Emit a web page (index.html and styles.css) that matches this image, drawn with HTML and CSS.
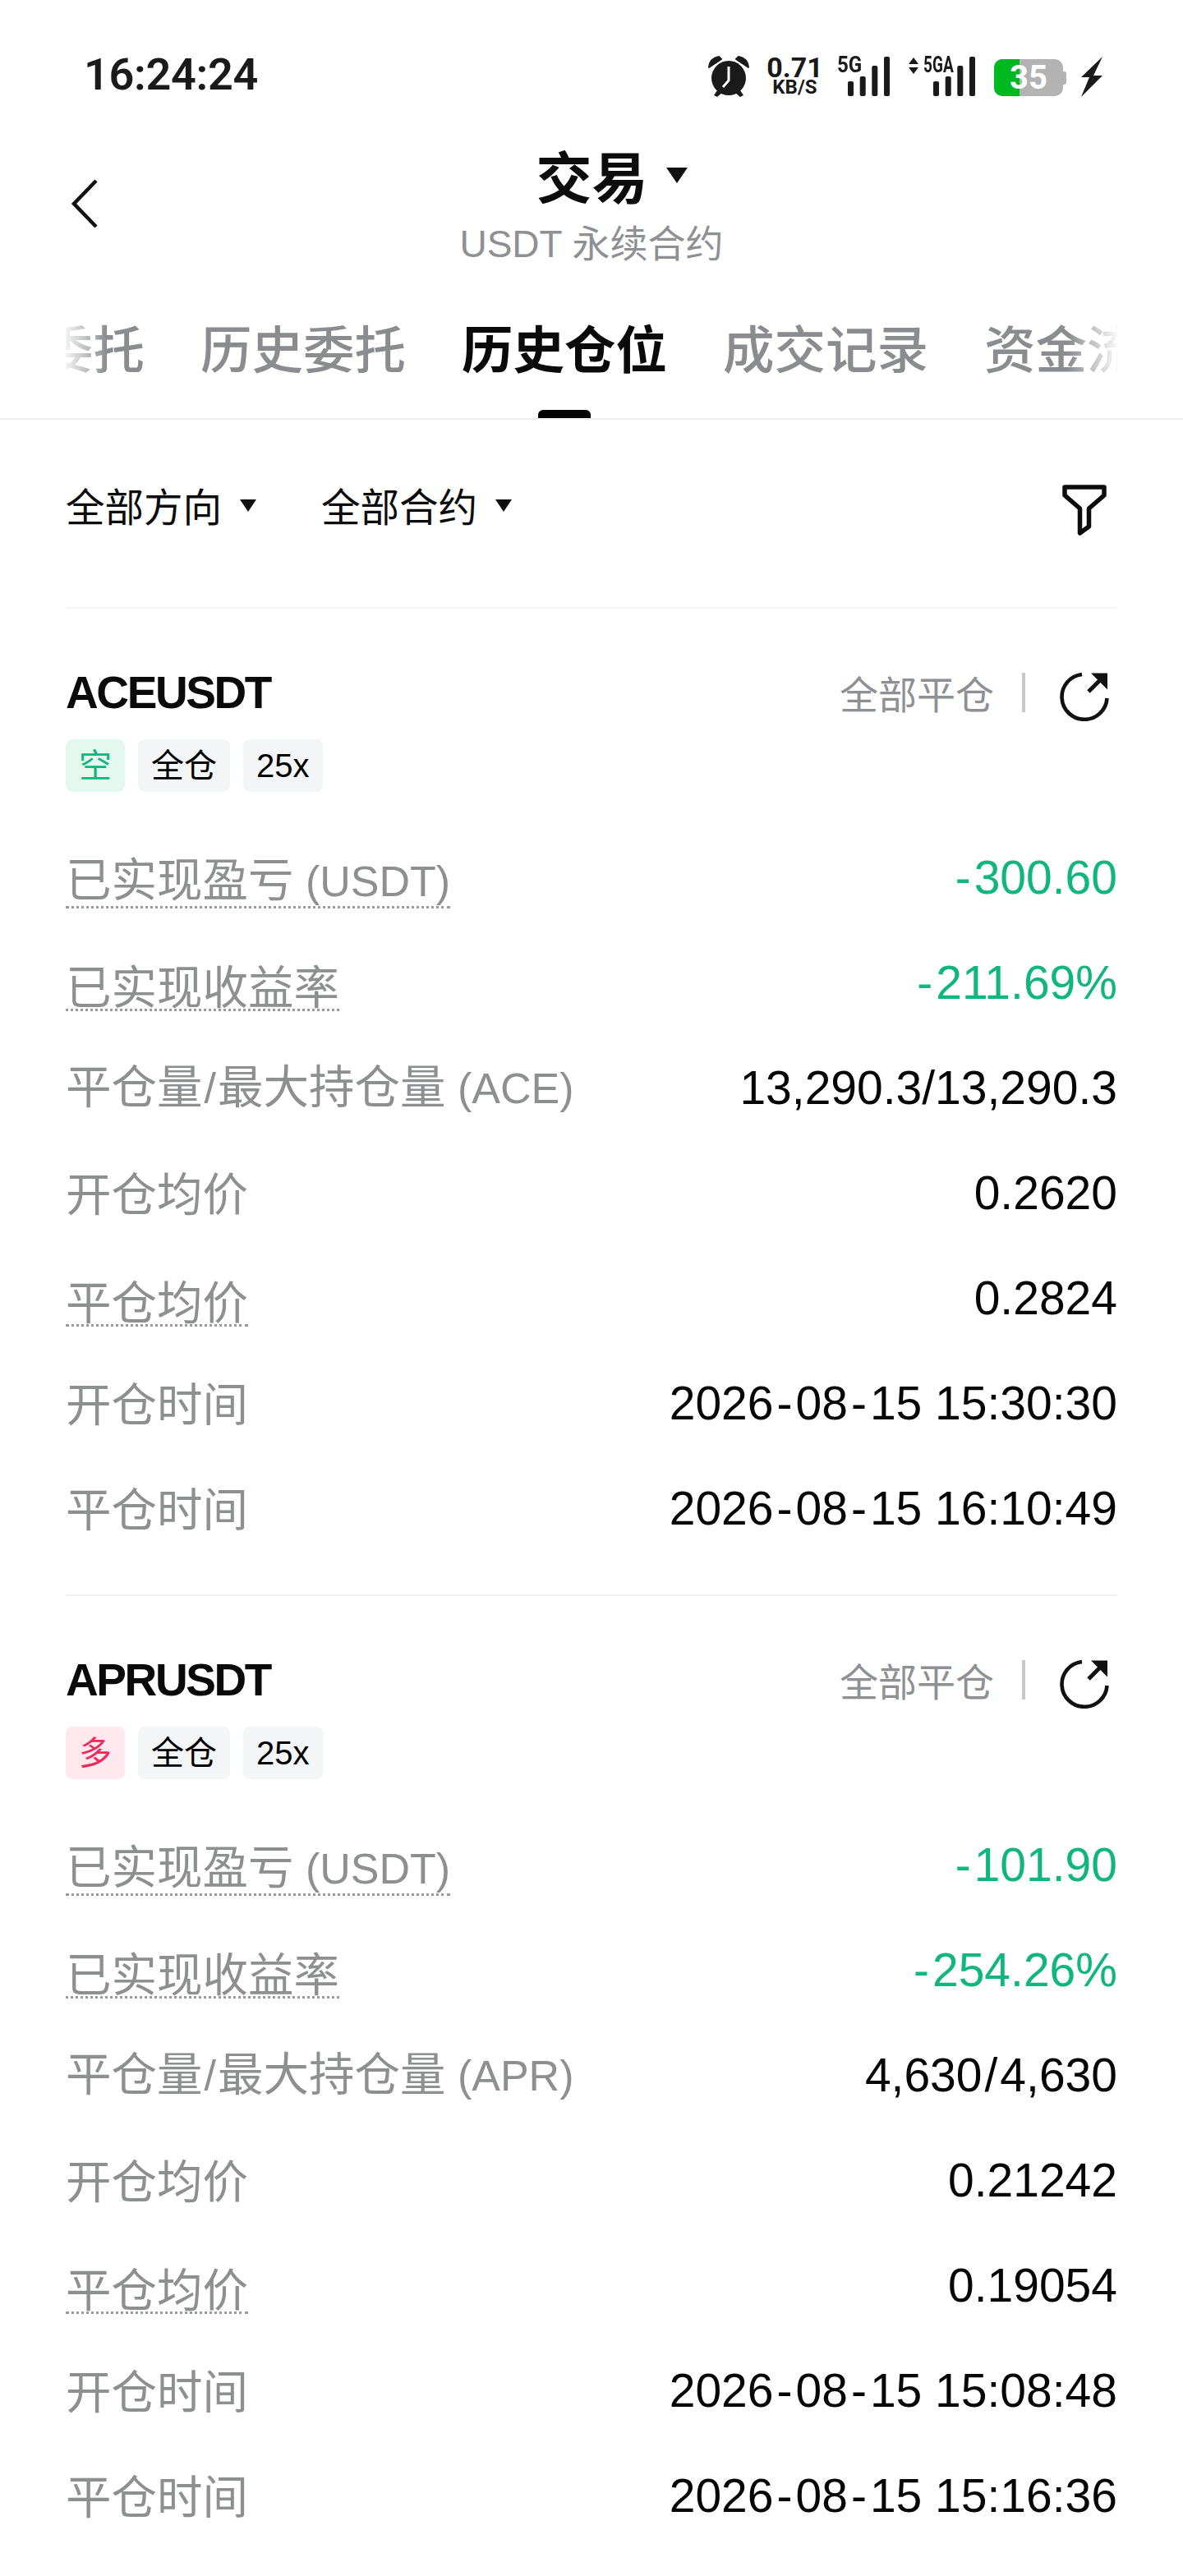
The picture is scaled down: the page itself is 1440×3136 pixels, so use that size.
FILE: index.html
```html
<!DOCTYPE html>
<html lang="zh-CN">
<head>
<meta charset="utf-8">
<title>交易</title>
<link rel="stylesheet" href="styles.css">
</head>
<body>
<div class="page">
  <header class="status">
    <span class="clock">16:24:24</span>
    <div class="status-icons">
      <svg class="ic-alarm" viewBox="0 0 50 50" width="50" height="50"><path d="M1 14 Q2 3 13 1 L16 4 Z M49 14 Q48 3 37 1 L34 4 Z" fill="#1a1a1a" stroke="#1a1a1a" stroke-width="2" stroke-linejoin="round"/><circle cx="25" cy="27" r="21" fill="#1a1a1a"/><path d="M11 42 L7 48 L11 50 L17 45Z M39 42 L43 48 L39 50 L33 45Z" fill="#1a1a1a"/><path d="M25 13 V30 L18 38" fill="none" stroke="#fff" stroke-width="3"/></svg>
      <div class="speed"><span class="speed-n">0.71</span><span class="speed-u">KB/S</span></div>
      <div class="sig sig-5g"><span class="sig-l">5G</span><svg viewBox="0 0 51 48" width="51" height="48"><rect x="0" y="30" width="7" height="18" rx="2"/><rect x="14.7" y="24" width="7" height="24" rx="2"/><rect x="29.3" y="11" width="7" height="37" rx="2"/><rect x="44" y="0" width="7" height="48" rx="2"/></svg></div>
      <div class="sig sig-5ga"><svg class="updown" viewBox="0 0 12 20" width="12" height="20"><path d="M6 0 L12 8 H0Z M6 20 L12 12 H0Z"/></svg><span class="sig-l">5GA</span><svg viewBox="0 0 51 48" width="51" height="48"><rect x="0" y="30" width="7" height="18" rx="2"/><rect x="14.7" y="24" width="7" height="24" rx="2"/><rect x="29.3" y="11" width="7" height="37" rx="2"/><rect x="44" y="0" width="7" height="48" rx="2"/></svg></div>
      <div class="battery"><span class="battery-body"><span class="battery-fill"></span></span><span class="battery-n">35</span><span class="battery-tip"></span></div>
      <svg class="ic-bolt" viewBox="0 0 27 49" width="27" height="49"><path d="M27 0 L1 25 H11 L1 49 L27 23 H16Z" fill="#1a1a1a"/></svg>
    </div>
  </header>

  <nav class="topbar">
    <svg class="back" viewBox="0 0 34 60" width="34" height="60"><path d="M31 2 L4 30 L31 58" fill="none" stroke="#111" stroke-width="4.5"/></svg>
    <div class="title-block">
      <div class="title"><span>交易</span><i class="caret caret-lg"></i></div>
      <div class="subtitle">USDT 永续合约</div>
    </div>
  </nav>

  <div class="tabs-wrap">
    <div class="tabs">
      <span class="tab tab-first">委托</span>
      <span class="tab">历史委托</span>
      <span class="tab active">历史仓位</span>
      <span class="tab">成交记录</span>
      <span class="tab">资金流</span>
    </div>
  </div>

  <div class="filters">
    <div class="filter-group">
      <span class="filter">全部方向<i class="caret"></i></span>
      <span class="filter">全部合约<i class="caret"></i></span>
    </div>
    <svg class="ic-filter" viewBox="0 0 54 63" width="54" height="63"><path d="M3 3 H51 V13 L32.5 29 V51 L21.5 59 V29 L3 13 Z" fill="none" stroke="#0c0c0c" stroke-width="5.5" stroke-linejoin="round"/></svg>
  </div>

  <main class="list">
    <section class="pos">
      <div class="pos-head">
        <div>
          <h2 class="sym">ACEUSDT</h2>
          <div class="tags"><span class="tag tag-short">空</span><span class="tag">全仓</span><span class="tag tag-lev">25x</span></div>
        </div>
        <div class="actions">
          <span class="close-all">全部平仓</span><span class="sep"></span>
          <svg class="ic-share" viewBox="0 0 60 60" width="60" height="60"><path d="M27 3 A27.5 27.5 0 1 0 57.5 32" fill="none" stroke="#111" stroke-width="4.6"/><path d="M35 24 L50 9" stroke="#111" stroke-width="5" fill="none"/><path d="M38 1.5 H58 V21.5 Z" fill="#111"/></svg>
        </div>
      </div>
      <dl class="rows">
        <div class="row"><dt class="dotted">已实现盈亏<span class="unit"> (USDT)</span></dt><dd class="green"><span class="hy">-</span>300.60</dd></div>
        <div class="row"><dt class="dotted">已实现收益率</dt><dd class="green"><span class="hy">-</span>211.69%</dd></div>
        <div class="row"><dt>平仓量<span class="unit slash">/</span>最大持仓量<span class="unit"> (ACE)</span></dt><dd>13,290.3/13,290.3</dd></div>
        <div class="row"><dt>开仓均价</dt><dd>0.2620</dd></div>
        <div class="row"><dt class="dotted">平仓均价</dt><dd>0.2824</dd></div>
        <div class="row"><dt>开仓时间</dt><dd>2026<span class="hy">-</span>08<span class="hy">-</span>15 15:30:30</dd></div>
        <div class="row"><dt>平仓时间</dt><dd>2026<span class="hy">-</span>08<span class="hy">-</span>15 16:10:49</dd></div>
      </dl>
    </section>

    <section class="pos">
      <div class="pos-head">
        <div>
          <h2 class="sym">APRUSDT</h2>
          <div class="tags"><span class="tag tag-long">多</span><span class="tag">全仓</span><span class="tag tag-lev">25x</span></div>
        </div>
        <div class="actions">
          <span class="close-all">全部平仓</span><span class="sep"></span>
          <svg class="ic-share" viewBox="0 0 60 60" width="60" height="60"><path d="M27 3 A27.5 27.5 0 1 0 57.5 32" fill="none" stroke="#111" stroke-width="4.6"/><path d="M35 24 L50 9" stroke="#111" stroke-width="5" fill="none"/><path d="M38 1.5 H58 V21.5 Z" fill="#111"/></svg>
        </div>
      </div>
      <dl class="rows">
        <div class="row"><dt class="dotted">已实现盈亏<span class="unit"> (USDT)</span></dt><dd class="green"><span class="hy">-</span>101.90</dd></div>
        <div class="row"><dt class="dotted">已实现收益率</dt><dd class="green"><span class="hy">-</span>254.26%</dd></div>
        <div class="row"><dt>平仓量<span class="unit slash">/</span>最大持仓量<span class="unit"> (APR)</span></dt><dd>4,630<span class="sl">/</span>4,630</dd></div>
        <div class="row"><dt>开仓均价</dt><dd>0.21242</dd></div>
        <div class="row"><dt class="dotted">平仓均价</dt><dd>0.19054</dd></div>
        <div class="row"><dt>开仓时间</dt><dd>2026<span class="hy">-</span>08<span class="hy">-</span>15 15:08:48</dd></div>
        <div class="row"><dt>平仓时间</dt><dd>2026<span class="hy">-</span>08<span class="hy">-</span>15 15:16:36</dd></div>
      </dl>
    </section>
  </main>
</div>
</body>
</html>
```
FILE: styles.css
```css
* { box-sizing: border-box; margin: 0; padding: 0; }
html, body { background: #fff; }
body {
  font-family: "Liberation Sans", "Noto Sans CJK SC", sans-serif;
  color: #000;
  overflow: hidden;
  height: 3136px;
}
.page { width: 1440px; }

/* status bar */
.status {
  height: 160px;
  padding: 68px 98px 0 102px;
  display: flex;
  justify-content: space-between;
  align-items: flex-start;
}
.clock { font: 600 54px/46px "Roboto", sans-serif; color: #1a1a1a; letter-spacing: -0.3px; }
.status-icons { display: flex; align-items: flex-start; }
.ic-alarm { margin-right: 23px; }
.speed { width: 65px; margin-right: 19px; display: flex; flex-direction: column; align-items: center; color: #1a1a1a; }
.speed-n { font: 700 34px/28px "Roboto", sans-serif; }
.speed-u { font: 700 24px/20px "Roboto", sans-serif; }
.sig { display: flex; position: relative; align-items: flex-end; height: 48px; margin-top: 1px; justify-content: flex-end; }
.sig svg { fill: #1a1a1a; display: block; }
.sig-5g { width: 64px; margin-right: 23px; }
.sig-5ga { width: 81px; margin-right: 23px; }
.sig-l { position: absolute; top: -1px; font: 700 28px/22px "Roboto", sans-serif; color: #1a1a1a; transform-origin: left top; }
.sig-5g .sig-l { left: 0; transform: scaleX(.86); }
.sig-5ga .sig-l { left: 18px; transform: scaleX(.68); }
.sig .updown { position: absolute; left: 0; top: 1px; }
.battery { position: relative; width: 88px; height: 45px; margin: 4px 17px 0 0; }
.battery-body { position: absolute; left: 0; top: 0; width: 84px; height: 45px; background: #b3b3b3; border-radius: 10px; overflow: hidden; }
.battery-fill { display: block; width: 31px; height: 100%; background: #00b81f; }
.battery-n { position: absolute; left: 0; width: 84px; top: 0; text-align: center; font: 700 40px/45px "Roboto", sans-serif; color: #fff; }
.battery-tip { position: absolute; right: 0; top: 15px; width: 4px; height: 16px; background: #b3b3b3; border-radius: 0 3px 3px 0; }
.ic-bolt { margin-top: 1px; }

/* nav */
.topbar { position: relative; margin-top: 20px; display: flex; justify-content: center; }
.back { position: absolute; left: 86px; top: 38px; }
.title-block { display: flex; flex-direction: column; align-items: center; }
.title { display: flex; align-items: center; font: 700 68px/66px "Noto Sans CJK SC", sans-serif; color: #0c0c0c; height: 66px; margin-left: 49px; }
.caret { display: inline-block; width: 0; height: 0; border-left: 10.5px solid transparent; border-right: 10.5px solid transparent; border-top: 15px solid #111; }
.caret-lg { margin-left: 22px; border-left-width: 13.5px; border-right-width: 13.5px; border-top-width: 19px; }
.subtitle { font: 400 46px/50px "Liberation Sans", "Noto Sans CJK SC", sans-serif; color: #8e9093; margin-top: 26px; }

/* tabs */
.tabs-wrap { padding-top: 64px; border-bottom: 2px solid #f0f0f2; }
.tabs {
  display: flex;
  gap: 68px;
  margin: 0 80px;
  height: 123px;
  white-space: nowrap;
  -webkit-mask-image: linear-gradient(90deg, rgba(0,0,0,.1) 0, #000 50px, #000 calc(100% - 60px), rgba(0,0,0,.05) 100%);
  mask-image: linear-gradient(90deg, rgba(0,0,0,.1) 0, #000 50px, #000 calc(100% - 60px), rgba(0,0,0,.05) 100%);
}
.tab { font: 500 62.5px/72px "Noto Sans CJK SC", sans-serif; color: #8a8c8f; flex: none; position: relative; }
.tab-first { margin-left: -29px; }
.tab.active { color: #0a0a0a; font-weight: 700; }
.tab.active::after { content: ""; position: absolute; left: 50%; bottom: 0; margin-left: -32px; width: 64px; height: 10px; background: #000; border-radius: 6px 6px 0 0; }

/* filters */
.filters { height: 228px; padding: 76px 93px 0 80px; display: flex; justify-content: space-between; align-items: flex-start; }
.filter-group { display: flex; gap: 79px; }
.filter { font: 400 47.5px/56px "Noto Sans CJK SC", sans-serif; display: flex; align-items: center; gap: 22px; color: #0c0c0c; }
.ic-filter { margin-top: 3px; }

/* positions */
.list { padding: 0 80px; }
.pos { border-top: 2px solid #f3f3f5; height: 1202px; }
.pos-head { display: flex; justify-content: space-between; align-items: flex-start; padding-top: 70px; }
.sym { font: 700 55px/64px "Liberation Sans", sans-serif; letter-spacing: -2.4px; color: #0a0a0a; }
.tags { display: flex; gap: 16px; margin-top: 25px; }
.tag { height: 64px; padding: 0 16px; background: #f4f5f6; border-radius: 8px; font: 400 40px/64px "Liberation Sans", "Noto Sans CJK SC", sans-serif; }
.tag-short { width: 72px; padding: 0; text-align: center; background: #e5f8f0; color: #10b67c; }
.tag-long { width: 72px; padding: 0; text-align: center; background: #ffe9ef; color: #ee2a5e; }
.actions { display: flex; align-items: flex-start; margin-top: 7px; }
.close-all { font: 400 47px/52px "Noto Sans CJK SC", sans-serif; color: #8e9093; margin-top: -1px; }
.sep { width: 4px; height: 48px; background: #c8c8c8; margin: 1px 42px 0 34px; }
.ic-share { margin-right: 10px; }

.rows { margin-top: 40px; }
.row { height: 128px; display: flex; justify-content: space-between; align-items: center; }
.row dt { font: 400 55.5px/60px "Noto Sans CJK SC", sans-serif; color: #8d8f91; margin-bottom: 4px; }
.unit { font: 400 52px/60px "Liberation Sans", sans-serif; }
.slash { margin: 0 2px; }
.row dt.dotted { border-bottom: 3px dotted #999b9d; margin: 7px 0 0; }
.row dd { font: 400 57px/60px "Liberation Sans", sans-serif; color: #050505; }
.row dd.green { color: #10b67c; }
.hy { margin: 0 4px; }
.sl { margin: 0 3px; }
```
